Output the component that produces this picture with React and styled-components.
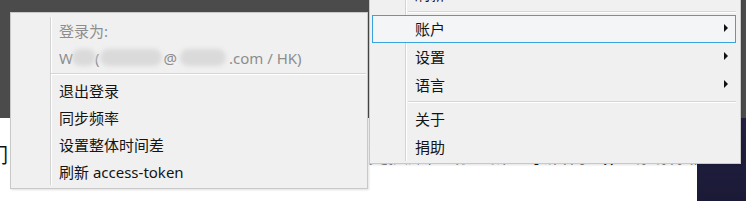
import React from "react";
import styled, { createGlobalStyle } from "styled-components";

const GlobalStyle = createGlobalStyle`
  html, body {
    margin: 0;
    padding: 0;
    background: #ffffff;
    overflow: hidden;
  }
  body {
    font-family: "Noto Sans", "Noto Sans CJK SC", sans-serif;
  }
`;

const Page = styled.div`
  position: relative;
  width: 746px;
  height: 201px;
  overflow: hidden;
`;

const TopBand = styled.div`
  height: 118px;
  background-color: #4b4b4b;
`;

const Content = styled.div`
  display: flex;
  height: 83px;
`;

const Article = styled.div`
  flex: 1;
  overflow: hidden;
  background-color: #ffffff;
`;

const Paragraph = styled.p`
  margin: 25px 0 0 -12px;
  font-family: "Noto Sans CJK SC", sans-serif;
  font-size: 20px;
  line-height: 24px;
  color: #111111;
  white-space: nowrap;
`;

const Sidebar = styled.div`
  width: 49px;
  background: linear-gradient(to bottom, #221f42, #1b1a36);
`;

const Menu = styled.div`
  --gutter: ${(p) => p.$gutter}px;
  --row: ${(p) => p.$row}px;
  position: absolute;
  left: ${(p) => p.$left}px;
  top: ${(p) => p.$top}px;
  width: ${(p) => p.$width}px;
  box-sizing: border-box;
  padding: ${(p) => p.$pad};
  border: 1px solid #c9c9c9;
  background:
    linear-gradient(
        to right,
        transparent var(--gutter),
        #d3d3d3 var(--gutter),
        #d3d3d3 calc(var(--gutter) + 1px),
        #ffffff calc(var(--gutter) + 1px),
        #ffffff calc(var(--gutter) + 2px),
        transparent calc(var(--gutter) + 2px)
      )
      content-box no-repeat,
    #f0f0f0;
  box-shadow: 1px 1px 2px rgba(0, 0, 0, 0.12);
  font-size: 15px;
`;

const Item = styled.div`
  display: flex;
  align-items: center;
  height: var(--row);
  box-sizing: border-box;
  margin: 0 ${(p) => p.$inset || "0"};
  padding-left: ${(p) => p.$indent}px;
  padding-bottom: ${(p) => p.$lift || 0}px;
  border: 1px solid ${(p) => (p.$active ? "#3ba3dc" : "transparent")};
  background-color: ${(p) => (p.$active ? "#f3f5f7" : "transparent")};
  color: ${(p) => (p.$disabled ? "#8d8d8d" : "#141414")};
  white-space: nowrap;
`;

const Label = styled.span`
  flex: 1;
`;

const Arrow = styled.span`
  width: 0;
  height: 0;
  margin-right: 7px;
  border-top: 4px solid transparent;
  border-bottom: 4px solid transparent;
  border-left: 4px solid #111111;
`;

const Separator = styled.div`
  height: 1px;
  margin: 2px ${(p) => p.$right}px 2px ${(p) => p.$left}px;
  background-color: #d6d6d6;
  border-bottom: 1px solid #ffffff;
`;

const Blur = styled.span`
  display: inline-block;
  width: ${(p) => p.$w}px;
  height: 17px;
  margin: 0 ${(p) => p.$gap || 0}px;
  vertical-align: middle;
  border-radius: 9px;
  background-color: #dadada;
  filter: blur(2px);
`;

const accountMenu = [
  { label: "退出登录" },
  { label: "同步频率" },
  { label: "设置整体时间差" },
  { label: "刷新 access-token" },
];

const mainMenu = [
  { label: "账户", sub: true, active: true },
  { label: "设置", sub: true },
  { label: "语言", sub: true },
];

export default function App() {
  return (
    <>
      <GlobalStyle />
      <Page>
        <TopBand />
        <Content>
          <Article>
            <Paragraph>
              们，我们这里不同平台的新版本，如果需要更换账户请重新登录后再试，谢谢你们的支持
            </Paragraph>
          </Article>
          <Sidebar />
        </Content>

        <Menu $left={10} $top={12} $width={358} $gutter={39} $row={27} $pad="4px 0 3px">
          <Item $indent={47} $disabled>
            登录为:
          </Item>
          <Item $indent={47} $disabled>
            W<Blur $w={24} $gap={-1} /> (<Blur $w={62} $gap={1} />@<Blur $w={46} $gap={3} />
            .com / HK)
          </Item>
          <Separator $left={40} $right={1} />
          {accountMenu.map((item) => (
            <Item key={item.label} $indent={47}>
              {item.label}
            </Item>
          ))}
        </Menu>

        <Menu $left={369} $top={-23} $width={372} $gutter={35} $row={28} $pad="3px 0 2px">
          <Item $inset="4px 0 2px" $indent={42} $lift={3}>
            刷新
          </Item>
          <Separator $left={38} $right={4} />
          {mainMenu.map((item) => (
            <Item
              key={item.label}
              $inset="4px 0 2px"
              $indent={42}
              $lift={2}
              $active={item.active}
            >
              <Label>{item.label}</Label>
              {item.sub && <Arrow />}
            </Item>
          ))}
          <Separator $left={38} $right={4} />
          <Item $inset="4px 0 2px" $indent={42} $lift={2}>
            关于
          </Item>
          <Item $inset="4px 0 2px" $indent={42} $lift={2}>
            捐助
          </Item>
        </Menu>
      </Page>
    </>
  );
}
